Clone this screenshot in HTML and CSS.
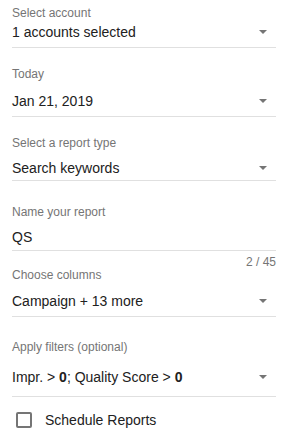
FILE: index.html
```html
<!DOCTYPE html>
<html>
<head>
<meta charset="utf-8">
<link rel="stylesheet" href="styles.css">
</head>
<body>
<div class="form">
  <div class="field field-a">
    <div class="label">Select account</div>
    <div class="value-row"><span class="value">1 accounts selected</span><span class="arrow"></span></div>
  </div>
  <div class="field field-b">
    <div class="label">Today</div>
    <div class="value-row"><span class="value">Jan 21, 2019</span><span class="arrow"></span></div>
  </div>
  <div class="field field-c">
    <div class="label">Select a report type</div>
    <div class="value-row"><span class="value">Search keywords</span><span class="arrow"></span></div>
  </div>
  <div class="field field-d">
    <div class="label">Name your report</div>
    <div class="value-row"><span class="value">QS</span></div>
  </div>
  <div class="counter">2 / 45</div>
  <div class="field field-e">
    <div class="label">Choose columns</div>
    <div class="value-row"><span class="value">Campaign + 13 more</span><span class="arrow"></span></div>
  </div>
  <div class="field field-f">
    <div class="label">Apply filters (optional)</div>
    <div class="value-row"><span class="value">Impr. &gt; <b>0</b>; Quality Score &gt; <b>0</b></span><span class="arrow"></span></div>
  </div>
  <label class="check-row">
    <span class="checkbox"></span>
    <span class="check-label">Schedule Reports</span>
  </label>
</div>
</body>
</html>
```
FILE: styles.css
```css
html, body {
  margin: 0;
  padding: 0;
  background: #ffffff;
}
body {
  font-family: "Liberation Sans", Arial, sans-serif;
  color: #212121;
}
.form {
  display: flex;
  flex-direction: column;
  padding: 0 16px 0 12px;
}
.field {
  display: flex;
  flex-direction: column;
  border-bottom: 1px solid #e0e0e0;
}
.label {
  font-size: 12px;
  line-height: 14px;
  color: #757575;
}
.value-row {
  display: flex;
  align-items: center;
  justify-content: space-between;
}
.value {
  font-size: 14px;
  line-height: 18px;
  color: #212121;
}
.value b {
  font-weight: 700;
}
.arrow {
  width: 0;
  height: 0;
  border-left: 4.5px solid transparent;
  border-right: 4.5px solid transparent;
  border-top: 4.5px solid #757575;
  margin-right: 9px;
}
.field-a { padding-top: 6px; padding-bottom: 6px; }
.field-a .value-row { margin-top: 3px; }
.field-b { margin-top: 19px; padding-bottom: 6px; }
.field-b .value-row { margin-top: 11px; }
.field-c { margin-top: 19px; padding-bottom: 3px; }
.field-c .value-row { margin-top: 9px; }
.field-d { margin-top: 24px; padding-bottom: 4px; }
.field-d .value-row { margin-top: 9px; }
.counter {
  margin-top: 5px;
  font-size: 12px;
  line-height: 12px;
  color: #757575;
  text-align: right;
}
.field-e { margin-top: 0; padding-bottom: 6px; }
.field-e .value-row { margin-top: 10px; }
.field-f { margin-top: 23px; padding-bottom: 10px; }
.field-f .value-row { margin-top: 14px; }
.check-row {
  display: flex;
  align-items: center;
  gap: 13px;
  margin-top: 15px;
  padding-left: 4px;
}
.checkbox {
  width: 12px;
  height: 12px;
  border: 2px solid #757575;
  border-radius: 2px;
}
.check-label {
  font-size: 14px;
  line-height: 16px;
  color: #212121;
}
```
